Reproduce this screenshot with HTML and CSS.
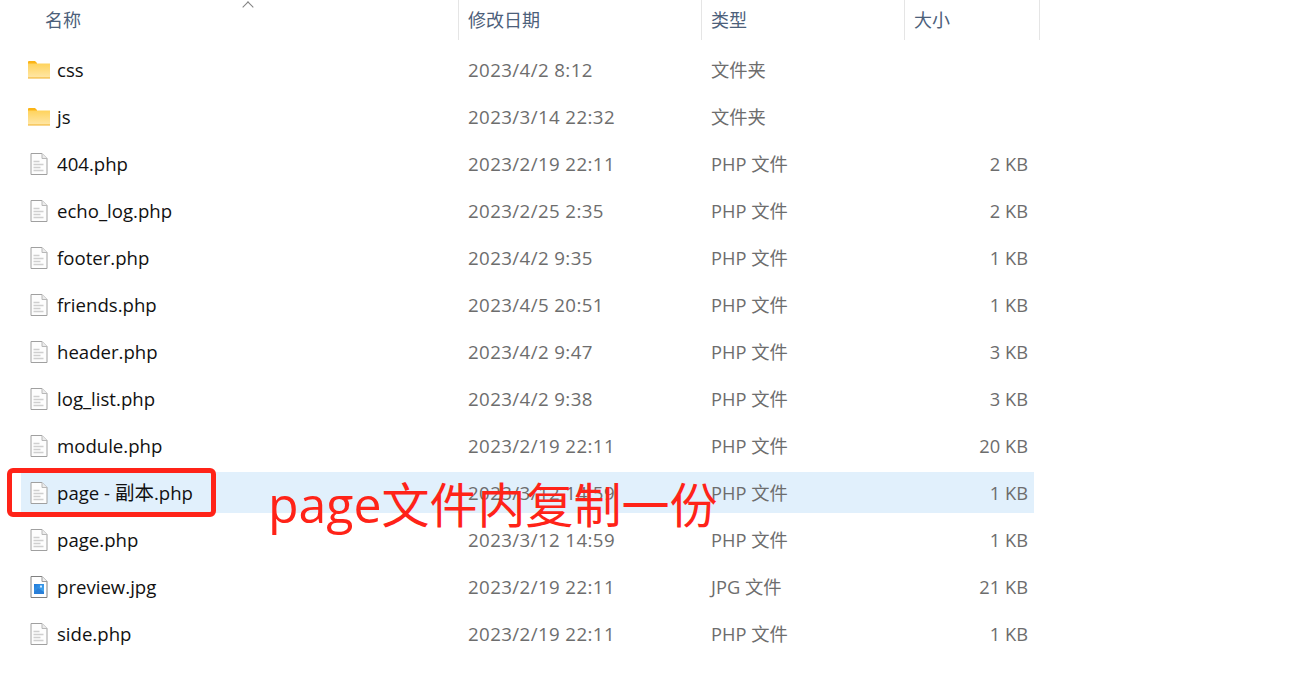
FILE: index.html
```html
<!DOCTYPE html>
<html lang="zh-CN">
<head>
    <meta charset="UTF-8" />
    <link rel="stylesheet" href="styles.css">
</head>
<body>
    <svg class="icon-defs" width="0" height="0">
        <defs>
            <linearGradient id="folder-fill" x1="0" y1="0" x2="0" y2="1">
                <stop offset="0" stop-color="#ffd35c"/>
                <stop offset="1" stop-color="#ffe7a8"/>
            </linearGradient>
            <linearGradient id="photo-fill" x1="0" y1="0" x2="1" y2="1">
                <stop offset="0" stop-color="#1f78d8"/>
                <stop offset="1" stop-color="#4fb4f5"/>
            </linearGradient>
        </defs>
        <symbol id="i-folder" viewBox="0 0 22 18">
            <path d="M0 1q0-1 1-1h6l2 2v1h-9z" fill="#fbb416"/>
            <path d="M0 2.500h22v14.500h-22z" fill="url(#folder-fill)"/>
            <path d="M0 16.500h22v1h-22z" fill="#f0ae22"/>
        </symbol>
        <symbol id="i-file" viewBox="0 0 18 22">
            <path d="M1 .5h11l5 5v16h-16z" fill="#fdfdfd" stroke="#a0a0a0"/>
            <path d="M12 .5v5h5" fill="#ececec" stroke="#b8b8b8"/>
            <path d="M3.500 8.500h6M3.500 11.500h10M3.500 14.500h7M3.500 17.500h10" stroke="#cfcfcf" stroke-width="1.500"/>
        </symbol>
        <symbol id="i-image" viewBox="0 0 18 22">
            <path d="M1 .5h11l5 5v16h-16z" fill="#fff" stroke="#808080"/>
            <path d="M12 .5v5h5" fill="#f0f0f0" stroke="#999"/>
            <path d="M4 8h10v10h-10z" fill="url(#photo-fill)"/>
            <path d="M4 18v-2l4-4 6 4v2z" fill="#2a7fd8"/>
            <path d="M10 9.500h2v2h-2z" fill="#d5ecff"/>
        </symbol>
    </svg>

    <div class="explorer">
        <div class="list-head">
            <div class="head-cell head-name">名称<span class="sort-arrow"></span></div>
            <div class="head-cell">修改日期</div>
            <div class="head-cell">类型</div>
            <div class="head-cell">大小</div>
        </div>

        <div class="file-row">
            <div class="file-name"><svg class="folder-icon"><use href="#i-folder"/></svg>css</div>
            <div class="file-date">2023/4/2 8:12</div><div>文件夹</div><div class="file-size"></div>
        </div>
        <div class="file-row">
            <div class="file-name"><svg class="folder-icon"><use href="#i-folder"/></svg>js</div>
            <div class="file-date">2023/3/14 22:32</div><div>文件夹</div><div class="file-size"></div>
        </div>
        <div class="file-row">
            <div class="file-name"><svg class="file-icon"><use href="#i-file"/></svg>404.php</div>
            <div class="file-date">2023/2/19 22:11</div><div>PHP 文件</div><div class="file-size">2 KB</div>
        </div>
        <div class="file-row">
            <div class="file-name"><svg class="file-icon"><use href="#i-file"/></svg>echo_log.php</div>
            <div class="file-date">2023/2/25 2:35</div><div>PHP 文件</div><div class="file-size">2 KB</div>
        </div>
        <div class="file-row">
            <div class="file-name"><svg class="file-icon"><use href="#i-file"/></svg>footer.php</div>
            <div class="file-date">2023/4/2 9:35</div><div>PHP 文件</div><div class="file-size">1 KB</div>
        </div>
        <div class="file-row">
            <div class="file-name"><svg class="file-icon"><use href="#i-file"/></svg>friends.php</div>
            <div class="file-date">2023/4/5 20:51</div><div>PHP 文件</div><div class="file-size">1 KB</div>
        </div>
        <div class="file-row">
            <div class="file-name"><svg class="file-icon"><use href="#i-file"/></svg>header.php</div>
            <div class="file-date">2023/4/2 9:47</div><div>PHP 文件</div><div class="file-size">3 KB</div>
        </div>
        <div class="file-row">
            <div class="file-name"><svg class="file-icon"><use href="#i-file"/></svg>log_list.php</div>
            <div class="file-date">2023/4/2 9:38</div><div>PHP 文件</div><div class="file-size">3 KB</div>
        </div>
        <div class="file-row">
            <div class="file-name"><svg class="file-icon"><use href="#i-file"/></svg>module.php</div>
            <div class="file-date">2023/2/19 22:11</div><div>PHP 文件</div><div class="file-size">20 KB</div>
        </div>
        <div class="file-row selected">
            <div class="file-name"><svg class="file-icon"><use href="#i-file"/></svg>page - <span class="name-cjk">副本</span>.php</div>
            <div class="file-date">2023/3/12 14:59</div><div>PHP 文件</div><div class="file-size">1 KB</div>
        </div>
        <div class="file-row">
            <div class="file-name"><svg class="file-icon"><use href="#i-file"/></svg>page.php</div>
            <div class="file-date">2023/3/12 14:59</div><div>PHP 文件</div><div class="file-size">1 KB</div>
        </div>
        <div class="file-row">
            <div class="file-name"><svg class="file-icon"><use href="#i-image"/></svg>preview.jpg</div>
            <div class="file-date">2023/2/19 22:11</div><div>JPG 文件</div><div class="file-size">21 KB</div>
        </div>
        <div class="file-row">
            <div class="file-name"><svg class="file-icon"><use href="#i-file"/></svg>side.php</div>
            <div class="file-date">2023/2/19 22:11</div><div>PHP 文件</div><div class="file-size">1 KB</div>
        </div>
    </div>

    <!-- annotations drawn on top of the screenshot -->
    <div class="mark-box"></div>
    <div class="mark-text">page<span class="mark-cjk">文件内复制一份</span></div>
</body>
</html>
```

FILE: styles.css
```css
* {
    box-sizing: border-box;
    margin: 0;
    padding: 0;
}

body {
    font-family: "Open Sans", "Noto Sans CJK SC", sans-serif;
    background: #fff;
    color: #6d6d6d;
    font-size: 18px;
    width: 1290px;
    height: 689px;
    overflow: hidden;
    position: relative;
}

.icon-defs {
    position: absolute;
}

.explorer {
    padding-left: 21px;
    width: 1040px;
}

.list-head {
    display: grid;
    grid-template-columns: 438px 243px 203px 135px;
    height: 40px;
    margin-bottom: 9px;
    color: #4c607a;
}

.head-cell {
    position: relative;
    padding-left: 9px;
    line-height: 40px;
    border-right: 1px solid #e5e5e5;
}

.head-name {
    padding-left: 24px;
}

.sort-arrow {
    position: absolute;
    left: 223px;
    top: 3px;
    width: 8px;
    height: 8px;
    border-left: 1px solid #808080;
    border-top: 1px solid #808080;
    transform: rotate(45deg);
}

.file-row {
    display: grid;
    grid-template-columns: 438px 243px 193px 139px;
    width: 1013px;
    height: 41px;
    margin-bottom: 6px;
    line-height: 41px;
    white-space: nowrap;
}

.file-row > div {
    padding-left: 9px;
    font-size: 18.300px;
}

.file-row.selected {
    background: #e1f0fc;
}

.file-row > .file-name {
    display: flex;
    align-items: center;
    padding-left: 7px;
    font-size: 18.600px;
    color: #111;
    white-space: pre;
}

.name-cjk {
    font-size: 19.500px;
}

.file-row > .file-date {
    font-size: 18.700px;
    letter-spacing: 0.400px;
}

.folder-icon {
    width: 22px;
    height: 18px;
    margin-right: 7px;
}

.file-icon {
    width: 18px;
    height: 22px;
    margin: 0 9px 0 2px;
}

.file-row > .file-size {
    text-align: right;
    padding: 0 6px 0 0;
}

.mark-box {
    position: absolute;
    left: 7px;
    top: 468px;
    width: 209px;
    height: 49px;
    border: 5px solid #ff2318;
    border-radius: 6px;
}

.mark-text {
    position: absolute;
    left: 268px;
    top: 470px;
    font-size: 50px;
    line-height: 68px;
    color: #ff2318;
    white-space: nowrap;
}

.mark-cjk {
    font-size: 48px;
}
```
